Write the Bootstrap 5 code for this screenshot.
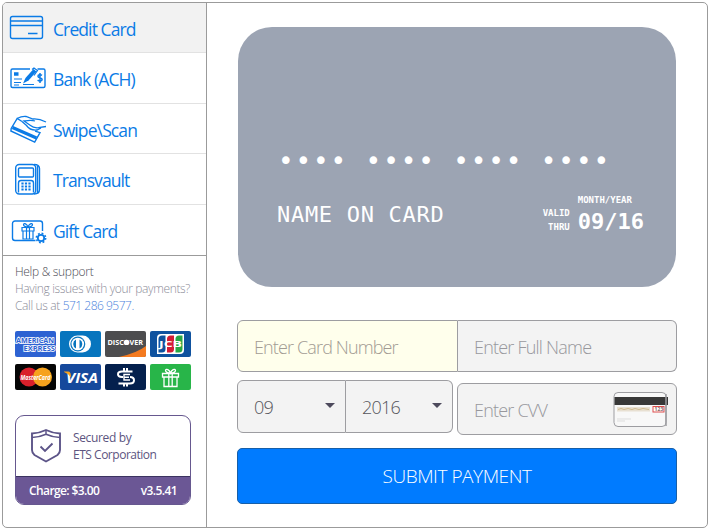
<!DOCTYPE html>
<html lang="en">
<head>
<meta charset="utf-8">
<meta name="viewport" content="width=device-width, initial-scale=1">
<title>Payment</title>
<link href="https://cdn.jsdelivr.net/npm/bootstrap@5.3.0/dist/css/bootstrap.min.css" rel="stylesheet">
<style>
body{font-family:"Open Sans","Noto Sans",sans-serif;background:#fff;height:531px;overflow:hidden;padding:2px 2px 3px 2px}
.shell{height:526px;width:706px;border:1px solid #9b9b9b;border-radius:5px;overflow:hidden}
.side{width:204px;border-right:1px solid #9b9b9b}
.methods{height:253px;border-bottom:1px solid #9b9b9b}
.method{color:#0b7be6;font-size:17.5px;letter-spacing:-.9px;border-bottom:1px solid #e2e2e2;padding-left:5px;text-decoration:none;height:50.6px;white-space:nowrap}
.method:last-child{border-bottom:0}
.method.active{background:#f2f2f2}
.method span{padding-top:3px}
.method svg{width:40px;height:40px;margin-right:5px;flex:none;fill:none;stroke:#0b7be6;stroke-width:1.4}
.help{font-size:12px;line-height:17px;padding:7px 12px 0;color:#8c8c98;letter-spacing:-.36px;font-weight:300;white-space:nowrap}
.help .title{color:#4d4d55;letter-spacing:-.3px}
.help a{color:#4a7fdc;text-decoration:none;letter-spacing:-.5px}
.brands{display:grid;grid-template-columns:repeat(4,41px);gap:7px 4px;padding:17px 12px 0}
.brands svg{width:41px;height:26px;display:block}
.brands text{font-family:"Open Sans",sans-serif;font-weight:700}
.secure{margin:25px 15px 0 12px;height:90px;border:1px solid #66588f;border-radius:9px;overflow:hidden;color:#5c5480;font-size:12px;line-height:17px;letter-spacing:-.48px}
.secured-by{letter-spacing:-.36px}
.secure-foot{background:#6b5795;border-top:1px solid #3b3360;color:#fff;height:28px;font-weight:600;letter-spacing:-.6px;padding:0 13px}
.pane{padding:24px 30px 0}
.plastic{height:260px;width:438px;margin-left:1px;border-radius:34px;background:#9ca4b3;color:#fff;font-family:"DejaVu Sans Mono",monospace;padding:122px 32px 0 39px}
.digits{height:24px;line-height:24px;font-size:26px;letter-spacing:1.87px;white-space:pre;padding-left:1px}
.holder{font-size:22px;letter-spacing:.7px;line-height:28px;margin-top:28px}
.tiny{font-size:9px;font-weight:700;line-height:14px}
.thru{padding-top:13px}
.expiry{font-size:22px;line-height:29px;font-weight:700}
.field{border:1px solid #9d9da1;background:#f3f3f3;color:#98989d;font-size:18px;font-weight:300;letter-spacing:-.78px;height:52px;padding:2px 16px 0;white-space:nowrap}
.field.current{background:#ffffec;color:#a29b93;letter-spacing:-.86px}
.sel{color:#55555b;height:53px;padding-right:10px}
.caret{width:0;height:0;border:5px solid transparent;border-top-color:#4d4a5c;border-bottom:0;margin-top:-4px}
.pay{height:56px;background:#007bff;border:1px solid #175fa8;border-radius:5px;color:#fff;font-size:19px;font-weight:300;letter-spacing:-.45px;margin-top:13px}
.pay:hover{background:#0070e8;color:#fff}
.cardnum{width:221px}.fullname{width:219px}
.month{width:109px}.year{width:107px}
.cvv{width:220px;margin-top:3px;padding:0 8px 0 16px}
.cvv span{padding-top:2px}
.shield{margin:0 11px 0 14px}
.entry{margin-top:33px;width:440px}
</style>
<script src="https://cdn.jsdelivr.net/npm/bootstrap@5.3.0/dist/js/bootstrap.bundle.min.js"></script>
</head>
<body>
<div class="shell d-flex">
  <aside class="side flex-shrink-0">
    <nav class="methods d-flex flex-column">
      <a class="method active d-flex align-items-center" href="#">
        <svg viewBox="0 0 40 40"><rect x="2.5" y="8.5" width="32" height="22" rx="2"/><path d="M2.5 13h32M2.5 17.5h32M20 25.5h9.500"/></svg><span>Credit Card</span></a>
      <a class="method d-flex align-items-center" href="#">
        <svg viewBox="0 0 40 40"><g transform="translate(0 .5)"><path d="M22 10.500H4.500a1.500 1.500 0 0 0-1.500 1.500v15.500a1.500 1.500 0 0 0 1.500 1.500h31a1.500 1.500 0 0 0 1.500-1.500V12a1.500 1.500 0 0 0-1.500-1.500h-6"/><path d="M6 15.500h4.500" stroke-width="3.500"/><path d="M6 20.500h8M6 24h7M6 26.500h5M15 26h11" stroke-width="1.200"/><path d="M15 25l2.500-5.500 8-9 3 2.500-8 9z" fill="#0b7be6" stroke="none"/><path d="M24 11l2-1.500 3.500 2.500-2 2.500M29.500 12l-3.500 5" stroke-width="1.200"/><path d="M34 16.800c-1.500-1.200-4.200-.6-4 1 .2 1.700 4.100 1.300 4.100 3.200 0 1.700-2.900 1.900-4.500.7M32 14.500v10" stroke-width="1.500"/></g></svg><span>Bank (ACH)</span></a>
      <a class="method d-flex align-items-center" href="#">
        <svg viewBox="0 0 40 40"><path d="M14 12.500L9.200 9.500 3.200 19.500l-.3 2.500 23.800 11.200 5.300-9.500-5-1.500"/><path d="M4.500 18.500l24 10.500" stroke-width="3.200"/><path d="M9 9.500c3-1.500 6-2.300 9-2l7 2.500q6-.500 13 3M27 12c-4-1.500-8-.5-11 0l6.500 4.500c2 1.800 5 2.500 8 2.200l7.500-1.200M14 12.500l4.500 4c2.500 3.500 5.500 5 10.500 4.500l4-2" stroke-width="1.300"/></svg><span>Swipe\Scan</span></a>
      <a class="method d-flex align-items-center" href="#">
        <svg viewBox="0 0 40 40"><rect x="7.700" y="5.500" width="20" height="29.500" rx="3.500"/><path d="M26 5.500c3.500 0 5.500 1 5.500 4V30.500c0 3-2 4.500-5.500 4.500M29.500 7v27"/><rect x="10.500" y="9" width="15" height="9" rx="1"/><path d="M10.500 33.500V24q0-2.500 2.500-2.500h10q2.500 0 2.500 2.500v9.500"/><path d="M14.500 23.500v9M18 23.500v9M21.500 23.500v9" stroke-width="2.200" stroke-dasharray="2 1"/></svg><span>Transvault</span></a>
      <a class="method d-flex align-items-center" href="#">
        <svg viewBox="0 0 40 40"><path d="M27.500 30.500H7a2.500 2.500 0 0 1-2.500-2.500V13.500A2.500 2.500 0 0 1 7 11h25a2.500 2.500 0 0 1 2.500 2.500V21"/><g transform="translate(0 1)"><path d="M14 16.500h12v3.500H14zM15 20h10v8H15zM18.500 16.500V28M21.500 16.500V28M20 16c-1-3-4-4.500-4.500-2.500-.2 1.700 2.500 2.500 4.500 2.500 2 0 4.700-.8 4.500-2.500C24 11.500 21 13 20 16z" stroke-width="1.200"/><circle cx="33" cy="27" r="3.200" stroke-width="1.800"/><circle cx="33" cy="27" r="4.700" stroke-width="1.500" stroke-dasharray="1.850 1.840"/></g></svg><span>Gift Card</span></a>
    </nav>
    <div class="help">
      <div class="title">Help &amp; support</div>
      <div>Having issues with your payments?</div>
      <div>Call us at <a href="#">571 286 9577.</a></div>
    </div>
    <div class="brands">
      <svg viewBox="0 0 41 26"><rect width="41" height="26" rx="2" fill="#2d62d2"/><g fill="#2d62d2" stroke="#fff" stroke-width="1.600" paint-order="stroke" font-size="7.500"><text x="1" y="11.500" textLength="38" lengthAdjust="spacingAndGlyphs">AMERICAN</text><text x="8.500" y="20" textLength="31.500" lengthAdjust="spacingAndGlyphs">EXPRESS</text></g></svg>
      <svg viewBox="0 0 41 26"><rect width="41" height="26" rx="2" fill="#0775be"/><path d="M17.500 4.500h5a8.500 8.500 0 0 1 0 17h-5a8.500 8.500 0 0 1 0-17z" fill="#fff"/><circle cx="17.800" cy="13" r="7.500" fill="#0775be"/><circle cx="17.800" cy="13" r="6.300" fill="#fff"/><path d="M16 8.500v9a5 5 0 0 1 0-9zM19.500 8.500v9a5 5 0 0 0 0-9z" fill="#0775be"/></svg>
      <svg viewBox="0 0 41 26"><rect width="41" height="26" rx="2" fill="#4d4d4f"/><path d="M14 26Q32 22 41 15v9a2 2 0 0 1-2 2z" fill="#f47a1f"/><text x="2.500" y="13.800" font-size="6.800" fill="#fff" textLength="35.500" lengthAdjust="spacingAndGlyphs">DISCOVER</text><circle cx="21.500" cy="11.400" r="2.700" fill="#fff"/></svg>
      <svg viewBox="0 0 41 26"><rect width="41" height="26" rx="2" fill="#0f529f"/><path d="M11 3h23v16q0 4-4 4H7V7q0-4 4-4z" fill="#fff"/><path d="M12 4.500h3.500V18q0 3.500-3.500 3.500H8.500V8q0-3.500 3.500-3.500z" fill="#0f529f"/><path d="M20.500 4.500H24V18q0 3.500-3.500 3.500H17V8q0-3.500 3.500-3.500z" fill="#d21c35"/><path d="M29 4.500h3.500V18q0 3.500-3.500 3.500h-3.500V8q0-3.500 3.500-3.500z" fill="#28a745"/><text x="9" y="16" font-size="8" fill="#fff" textLength="23" lengthAdjust="spacingAndGlyphs">JCB</text></svg>
      <svg viewBox="0 0 41 26"><rect width="41" height="26" rx="2" fill="#050505"/><circle cx="14" cy="13" r="9.500" fill="#d9202b"/><circle cx="27.500" cy="13" r="9.500" fill="#f6a21d"/><text x="5.500" y="15.500" font-size="6.800" font-style="italic" fill="#fff" textLength="30" lengthAdjust="spacingAndGlyphs">MasterCard</text></svg>
      <svg viewBox="0 0 41 26"><rect width="41" height="26" rx="2" fill="#15499c"/><text x="6" y="18.500" font-size="15" font-style="italic" fill="#fff" textLength="32" lengthAdjust="spacingAndGlyphs">VISA</text><path d="M4 7.500h4.500q1.500 0 2 2l.8 4Q8.500 9.500 4 8z" fill="#f6a21d"/></svg>
      <svg viewBox="0 0 41 26"><rect width="41" height="26" rx="2" fill="#04204d"/><path d="M27.500 7.500H17q-4 0-4 2.700t4 2.700h1M13.500 19.500H25q4 0 4-3.200t-4-3.200M19 4v3.500M22 4v3.500M19 19.500v3M22 19.500v3" fill="none" stroke="#fff" stroke-width="2"/><path d="M25 10.500h-6v5.500h6M19 13.200h5" fill="none" stroke="#fff" stroke-width="1.400"/></svg>
      <svg viewBox="0 0 41 26"><rect width="41" height="26" rx="2" fill="#28b549"/><path d="M12.500 9.500h16v3.500h-16zM14 13h13v9.500H14zM18.800 9.500v13M22.200 9.500v13M20.500 9c-1-3-4.500-5-5-2.700-.2 2 2.500 2.700 5 2.700 2.500 0 5.200-.7 5-2.700C25 4 21.500 6 20.500 9z" fill="none" stroke="#fff" stroke-width="1.300"/></svg>
    </div>
    <div class="secure d-flex flex-column">
      <div class="d-flex align-items-center flex-grow-1">
        <svg class="shield" width="32" height="36" viewBox="0 0 32 36" fill="none" stroke="#5c5488" stroke-width="1.900"><path d="M2 5.500Q10 5 16 2q6 3 14 3.500V22q0 3-2.500 5L16 33.500 4.500 27Q2 25 2 22z"/><path d="M2 9.500Q10 9 16 6.200q6 2.800 14 3.300M16 2v4.200" stroke-width="1.500"/><path d="M10.500 18.500l4.500 4.500 7.500-7.500"/></svg>
        <div><div class="secured-by">Secured by</div>ETS Corporation</div>
      </div>
      <div class="secure-foot d-flex justify-content-between align-items-center"><span>Charge: $3.00</span><span>v3.5.41</span></div>
    </div>
  </aside>
  <main class="pane flex-grow-1">
    <div class="plastic">
      <div class="digits">•••• •••• •••• ••••</div>
      <div class="d-flex justify-content-between">
        <div class="holder">NAME ON CARD</div>
        <div class="d-flex mt-3 pt-1">
          <div class="tiny thru text-end me-2">VALID<br>THRU</div>
          <div><div class="tiny">MONTH/YEAR</div><div class="expiry">09/16</div></div>
        </div>
      </div>
    </div>
    <form class="entry">
      <div class="d-flex">
        <div class="field current cardnum d-flex align-items-center rounded-start">Enter Card Number</div>
        <div class="field fullname d-flex align-items-center rounded-end border-start-0">Enter Full Name</div>
      </div>
      <div class="d-flex justify-content-between mt-2">
        <div class="d-flex">
          <div class="field sel month d-flex align-items-center justify-content-between rounded-start"><span>09</span><i class="caret"></i></div>
          <div class="field sel year d-flex align-items-center justify-content-between rounded-end border-start-0"><span>2016</span><i class="caret"></i></div>
        </div>
        <div class="field cvv d-flex align-items-center justify-content-between rounded"><span>Enter CVV</span>
          <svg width="55" height="35" viewBox="0 0 55 35"><rect x="1" y=".5" width="52" height="34" rx="4" fill="#f8f8f8" stroke="#9d9da1"/><path d="M1.500 5H55v8H1.500z" fill="#383838"/><path d="M4 15h33v4.500H4z" fill="#e8e0d2"/><path d="M5 17.500l3-1 3 1 4-1 4 1 3-1 4 1 4-1 6 1" fill="none" stroke="#d0bb91"/><rect x="40" y="14.500" width="11" height="5.500" fill="#fff" stroke="#dd4c4c"/><text x="41.500" y="19.300" font-size="5" font-weight="700" fill="#866" textLength="8">123</text><path d="M4 27h14M4 29h8" stroke="#ddd"/><path d="M53 2v32" stroke="#9d9da1" stroke-width="1.500"/></svg>
        </div>
      </div>
      <button type="button" class="pay btn w-100 p-0">SUBMIT PAYMENT</button>
    </form>
  </main>
</div>
</body>
</html>
